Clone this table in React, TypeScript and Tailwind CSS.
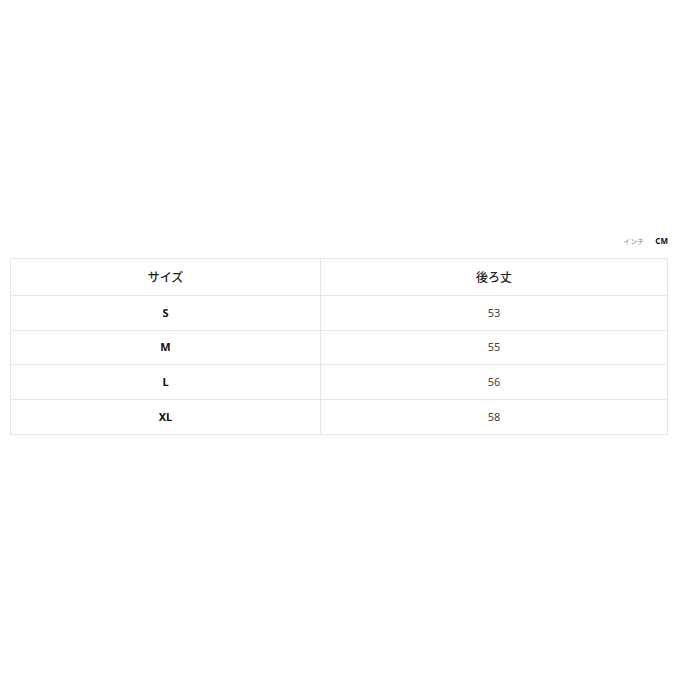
import React from "react";

const rows = [
  ["S", "53"],
  ["M", "55"],
  ["L", "56"],
  ["XL", "58"],
];

export default function App() {
  return (
    <div
      className="w-[680px] h-[680px] bg-white"
      style={{ fontFamily: '"Noto Sans", "Noto Sans CJK JP", sans-serif' }}
    >
      <div className="pt-[233px] pl-[10px] pr-[12px]">
        <div className="flex justify-end items-center gap-[11px] h-[16px] leading-none">
          <span className="text-[#888] text-[7px]">インチ</span>
          <span className="font-bold text-[#111] text-[8px]">CM</span>
        </div>
        <div className="mt-[9px] border border-[#e6e6e6]">
          <div className="grid grid-cols-[310px_1fr] h-[37px] border-b border-[#e6e6e6]">
            <div className="flex items-center justify-center pt-[2px] border-r border-[#e6e6e6] text-[12px] font-medium text-[#222]">
              サイズ
            </div>
            <div className="flex items-center justify-center pt-[2px] text-[12px] font-medium text-[#222]">
              後ろ丈
            </div>
          </div>
          {rows.map(([s, v], i) => (
            <div
              key={s}
              className={`grid grid-cols-[310px_1fr] h-[34.5px] ${
                i < rows.length - 1 ? "border-b border-[#e6e6e6]" : ""
              }`}
            >
              <div className="flex items-center justify-center border-r border-[#e6e6e6] text-[11px] font-bold text-[#111]">
                {s}
              </div>
              <div className="flex items-center justify-center text-[11px] text-[#444]">
                {v}
              </div>
            </div>
          ))}
        </div>
      </div>
    </div>
  );
}
